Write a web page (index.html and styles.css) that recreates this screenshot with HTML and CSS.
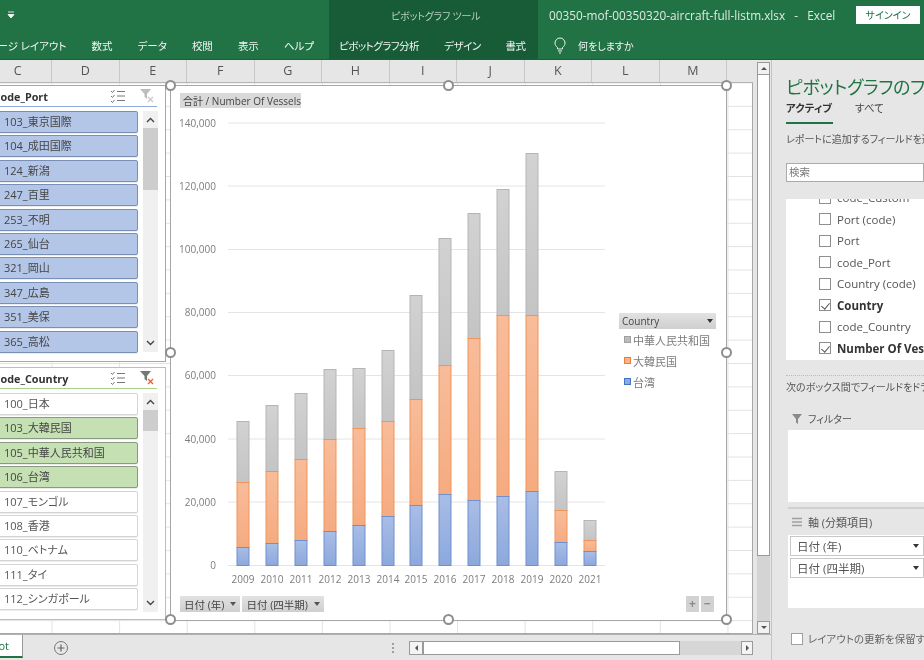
FILE: index.html
```html
<!DOCTYPE html>
<html lang="ja">
<head>
<meta charset="utf-8">
<title>Excel</title>
<link rel="stylesheet" href="styles.css">
</head>
<body>
<div class="app">
  <header class="ribbon">
    <div class="rb-left">
      <div class="qat">
        <svg width="8" height="8" viewBox="0 0 8 8"><path d="M1 1h6M1 3.500h6L4 7z" stroke="#fff" fill="#fff" stroke-width=".8"/></svg>
      </div>
      <nav class="tabs">
        <span>ページ レイアウト</span><span>数式</span><span>データ</span><span>校閲</span><span>表示</span><span>ヘルプ</span>
      </nav>
    </div>
    <div class="rb-context">
      <div class="context-title">ピボットグラフ ツール</div>
      <nav class="tabs">
        <span>ピボットグラフ分析</span><span>デザイン</span><span>書式</span>
      </nav>
    </div>
    <div class="rb-right">
      <div class="title-row">
        <span class="file-name">00350-mof-00350320-aircraft-full-listm.xlsx &nbsp;&nbsp;-&nbsp;&nbsp; Excel</span>
        <span class="signin">サインイン</span>
      </div>
      <div class="tell-row">
        <svg width="14" height="18" viewBox="0 0 14 18"><path d="M4.500 11.500C3 10.300 2 9 2 7a5 5 0 0 1 10 0c0 2-1 3.300-2.500 4.500v1.500h-5zM5 15h4M6 17h2" fill="none" stroke="#e8f2ec" stroke-width="1"/></svg>
        <span>何をしますか</span>
      </div>
    </div>
  </header>

  <main class="workspace">
    <section class="sheet">
      <div class="sheet-main">
        <div class="sheet-col">
          <div class="col-headers">
            <span class="col first">C</span><span class="col">D</span><span class="col">E</span><span class="col">F</span><span class="col">G</span><span class="col">H</span><span class="col">I</span><span class="col">J</span><span class="col">K</span><span class="col">L</span><span class="col">M</span>
          </div>
          <div class="sheet-body">
            <aside class="slicer slicer-blue">
              <div class="slicer-head">
                <span class="slicer-title">code_Port</span>
                <svg class="multi" width="16" height="14" viewBox="0 0 16 14"><path d="M1 2l1.500 1.500L4.500 1M1 7l1.500 1.500L4.500 6M1 12l1.500 1.500L4.500 11M7 2.500h8M7 7h8M7 11.500h8" fill="none" stroke="#777" stroke-width="1"/></svg>
                <svg class="clear" width="16" height="16" viewBox="0 0 16 16"><path d="M1 1h11L8 6v5L5.500 9V6z" fill="#bdbdbd"/><path d="M9 9l5 5M14 9l-5 5" stroke="#c9c9c9" stroke-width="1.300"/></svg>
              </div>
              <div class="slicer-body">
                <ul class="items">
                  <li class="on">103_東京国際</li><li class="on">104_成田国際</li><li class="on">124_新潟</li><li class="on">247_百里</li><li class="on">253_不明</li><li class="on">265_仙台</li><li class="on">321_岡山</li><li class="on">347_広島</li><li class="on">351_美保</li><li class="on">365_高松</li>
                </ul>
                <div class="mini-scroll">
                  <svg class="chev" width="9" height="6" viewBox="0 0 9 6"><path d="M1 5l3.500-3.500L8 5" fill="none" stroke="#444" stroke-width="1.400"/></svg>
                  <span class="mini-thumb tall"></span>
                  <svg class="chev bottom" width="9" height="6" viewBox="0 0 9 6"><path d="M1 1l3.500 3.500L8 1" fill="none" stroke="#444" stroke-width="1.400"/></svg>
                </div>
              </div>
            </aside>

            <aside class="slicer slicer-green">
              <div class="slicer-head">
                <span class="slicer-title">code_Country</span>
                <svg class="multi" width="16" height="14" viewBox="0 0 16 14"><path d="M1 2l1.500 1.500L4.500 1M1 7l1.500 1.500L4.500 6M1 12l1.500 1.500L4.500 11M7 2.500h8M7 7h8M7 11.500h8" fill="none" stroke="#777" stroke-width="1"/></svg>
                <svg class="clear" width="16" height="16" viewBox="0 0 16 16"><path d="M1 1h11L8 6v5L5.500 9V6z" fill="#777"/><path d="M9 9l5 5M14 9l-5 5" stroke="#e8613a" stroke-width="1.400"/></svg>
              </div>
              <div class="slicer-body">
                <ul class="items">
                  <li>100_日本</li><li class="on">103_大韓民国</li><li class="on">105_中華人民共和国</li><li class="on">106_台湾</li><li>107_モンゴル</li><li>108_香港</li><li>110_ベトナム</li><li>111_タイ</li><li>112_シンガポール</li>
                </ul>
                <div class="mini-scroll">
                  <svg class="chev" width="9" height="6" viewBox="0 0 9 6"><path d="M1 5l3.500-3.500L8 5" fill="none" stroke="#444" stroke-width="1.400"/></svg>
                  <span class="mini-thumb short"></span>
                  <svg class="chev bottom" width="9" height="6" viewBox="0 0 9 6"><path d="M1 1l3.500 3.500L8 1" fill="none" stroke="#444" stroke-width="1.400"/></svg>
                </div>
              </div>
            </aside>

            <figure class="chart">
              <svg class="plot" width="555" height="534" viewBox="171 86 555 534">
                <defs>
                  <linearGradient id="gb" x1="0" y1="0" x2="0" y2="1"><stop offset="0" stop-color="#a9bde6"/><stop offset="1" stop-color="#8ca8dc"/></linearGradient>
                  <linearGradient id="go" x1="0" y1="0" x2="0" y2="1"><stop offset="0" stop-color="#f8bc9a"/><stop offset="1" stop-color="#f5ab80"/></linearGradient>
                  <linearGradient id="gg" x1="0" y1="0" x2="0" y2="1"><stop offset="0" stop-color="#d2d2d2"/><stop offset="1" stop-color="#c4c4c4"/></linearGradient>
                </defs>
                <path class="gridlines" d="M228 123H605M228 186H605M228 249.500H605M228 312.500H605M228 375.500H605M228 439H605M228 502H605M228 565.500H605"/>
                <g class="ylab">
                  <text x="216" y="127">140,000</text><text x="216" y="190">120,000</text><text x="216" y="253">100,000</text><text x="216" y="316">80,000</text><text x="216" y="379">60,000</text><text x="216" y="443">40,000</text><text x="216" y="506">20,000</text><text x="216" y="569">0</text>
                </g>
                <g class="xlab">
                  <text x="243" y="583">2009</text><text x="272" y="583">2010</text><text x="301" y="583">2011</text><text x="330" y="583">2012</text><text x="359" y="583">2013</text><text x="388" y="583">2014</text><text x="416" y="583">2015</text><text x="445" y="583">2016</text><text x="474" y="583">2017</text><text x="503" y="583">2018</text><text x="532" y="583">2019</text><text x="561" y="583">2020</text><text x="590" y="583">2021</text>
                </g>
                <g class="s-gray">
                  <rect x="237" y="421.500" width="12" height="61"/><rect x="266" y="405.500" width="12" height="66"/><rect x="295" y="393.500" width="12" height="66"/><rect x="324" y="369.500" width="12" height="70"/><rect x="353" y="368.500" width="12" height="60"/><rect x="382" y="350.500" width="12" height="71"/><rect x="410" y="295.500" width="12" height="104"/><rect x="439" y="238.500" width="12" height="127"/><rect x="468" y="213.500" width="12" height="125"/><rect x="497" y="189.500" width="12" height="126"/><rect x="526" y="153.500" width="12" height="162"/><rect x="555" y="471.500" width="12" height="39"/><rect x="584" y="520.500" width="12" height="20"/>
                </g>
                <g class="s-orange">
                  <rect x="237" y="482.500" width="12" height="65"/><rect x="266" y="471.500" width="12" height="72"/><rect x="295" y="459.500" width="12" height="81"/><rect x="324" y="439.500" width="12" height="92"/><rect x="353" y="428.500" width="12" height="97"/><rect x="382" y="421.500" width="12" height="95"/><rect x="410" y="399.500" width="12" height="106"/><rect x="439" y="365.500" width="12" height="129"/><rect x="468" y="338.500" width="12" height="162"/><rect x="497" y="315.500" width="12" height="181"/><rect x="526" y="315.500" width="12" height="176"/><rect x="555" y="510.500" width="12" height="32"/><rect x="584" y="540.500" width="12" height="11"/>
                </g>
                <g class="s-blue">
                  <rect x="237" y="547.500" width="12" height="18"/><rect x="266" y="543.500" width="12" height="22"/><rect x="295" y="540.500" width="12" height="25"/><rect x="324" y="531.500" width="12" height="34"/><rect x="353" y="525.500" width="12" height="40"/><rect x="382" y="516.500" width="12" height="49"/><rect x="410" y="505.500" width="12" height="60"/><rect x="439" y="494.500" width="12" height="71"/><rect x="468" y="500.500" width="12" height="65"/><rect x="497" y="496.500" width="12" height="69"/><rect x="526" y="491.500" width="12" height="74"/><rect x="555" y="542.500" width="12" height="23"/><rect x="584" y="551.500" width="12" height="14"/>
                </g>
              </svg>
              <span class="field-btn value-btn">合計 / Number Of Vessels</span>
              <div class="axis-btns">
                <span class="field-btn">日付 (年)<i class="caret"></i></span>
                <span class="field-btn">日付 (四半期)<i class="caret"></i></span>
              </div>
              <div class="zoom-btns"><span>+</span><span>−</span></div>
              <div class="legend">
                <span class="field-btn legend-btn">Country<i class="caret dark"></i></span>
                <ul>
                  <li><i class="sw sw-gray"></i>中華人民共和国</li>
                  <li><i class="sw sw-orange"></i>大韓民国</li>
                  <li><i class="sw sw-blue"></i>台湾</li>
                </ul>
              </div>
              <i class="handle tl"></i><i class="handle tc"></i><i class="handle tr"></i>
              <i class="handle ml"></i><i class="handle mr"></i>
              <i class="handle bl"></i><i class="handle bc"></i><i class="handle br"></i>
            </figure>
          </div>
        </div>
        <div class="vscroll">
          <span class="sb-btn up"></span>
          <span class="sb-thumb"></span>
          <span class="sb-track"></span>
          <span class="sb-btn down"></span>
        </div>
      </div>
      <footer class="sheet-tabs">
        <span class="active-tab">Pivot</span>
        <svg class="add" width="16" height="16" viewBox="0 0 16 16"><circle cx="8" cy="8" r="6.500" fill="none" stroke="#777"/><path d="M8 4.500v7M4.500 8h7" stroke="#666" stroke-width="1.200"/></svg>
        <span class="dots"></span>
        <div class="hscroll">
          <span class="hs-btn"><i class="tri-l"></i></span>
          <span class="hs-thumb"></span>
          <span class="hs-btn right"><i class="tri-r"></i></span>
        </div>
      </footer>
    </section>

    <aside class="pane">
      <h2>ピボットグラフのフィールド</h2>
      <div class="pane-tabs"><span class="is-active">アクティブ</span><span>すべて</span></div>
      <p class="hint">レポートに追加するフィールドを選択してください:</p>
      <div class="search">検索</div>
      <ul class="fields">
        <li class="peek"><i class="cb"></i>code_Custom</li>
        <li><i class="cb"></i>Port (code)</li>
        <li><i class="cb"></i>Port</li>
        <li><i class="cb"></i>code_Port</li>
        <li><i class="cb"></i>Country (code)</li>
        <li class="bold"><i class="cb checked"></i>Country</li>
        <li><i class="cb"></i>code_Country</li>
        <li class="bold"><i class="cb checked"></i>Number Of Vessels</li>
      </ul>
      <p class="drag-hint">次のボックス間でフィールドをドラッグしてください:</p>
      <div class="area-label">
        <svg width="12" height="12" viewBox="0 0 12 12"><path d="M1 1h10L7 6v5L5 9.500V6z" fill="#8a8a8a"/></svg>
        <span>フィルター</span>
      </div>
      <div class="area-box filter-box"></div>
      <div class="area-label axis-label">
        <svg width="12" height="12" viewBox="0 0 12 12"><path d="M1 2.500h10M1 6h10M1 9.500h10" stroke="#a0a0a0" stroke-width="1.500"/></svg>
        <span>軸 (分類項目)</span>
      </div>
      <div class="area-box axis-box">
        <div class="pill">日付 (年)<i class="caret dark"></i></div>
        <div class="pill">日付 (四半期)<i class="caret dark"></i></div>
      </div>
      <label class="defer"><i class="cb big"></i>レイアウトの更新を保留する</label>
    </aside>
  </main>
</div>
</body>
</html>
```

FILE: styles.css
```css
* { box-sizing: border-box; }
html, body { margin: 0; padding: 0; height: 100%; overflow: hidden; }
body {
  font-family: "Open Sans", "Noto Sans CJK JP", "Liberation Sans", sans-serif;
  font-feature-settings: "palt";
  color: #444;
  background: #e6e6e6;
}
ul { list-style: none; margin: 0; padding: 0; }
p, h2, figure { margin: 0; }
i { font-style: normal; }

.app { width: 924px; height: 660px; display: flex; flex-direction: column; overflow: hidden; filter: blur(0.35px); }

/* ribbon */
.ribbon {
  height: 60px; flex: none; display: flex;
  background: #217346; color: #f1f6f3; font-size: 11px;
  border-bottom: 1px solid #1a5f3a; overflow: hidden;
}
.tabs { display: flex; align-items: center; gap: 25px; height: 28px; white-space: nowrap; font-size: 10.500px; letter-spacing: -0.5px; }
.rb-left { width: 329px; flex: none; overflow: hidden; }
.rb-left .tabs { justify-content: flex-end; padding-right: 15px; letter-spacing: 0; }
.qat { height: 31px; padding: 11px 0 0 7px; }
.qat svg { display: block; }
.rb-context { width: 209px; flex: none; background: #185c37; padding-left: 10px; }
.context-title { height: 31px; padding: 8px 0 0 52px; color: #b5cfc0; font-size: 10px; letter-spacing: -0.2px; }
.rb-right { flex: 1; min-width: 0; }
.title-row { display: flex; align-items: center; justify-content: space-between; height: 31px; padding: 0 4px 2px 11px; }
.file-name { font-size: 11.800px; color: #dfeae4; white-space: nowrap; }
.signin { width: 64px; height: 18px; background: #fff; color: #217346; font-size: 10px; line-height: 18px; text-align: center; }
.tell-row { display: flex; align-items: center; gap: 11px; height: 28px; padding-left: 15px; font-size: 10px; }

/* sheet */
.workspace { flex: 1; display: flex; min-height: 0; }
.sheet { width: 772px; flex: none; display: flex; flex-direction: column; border-right: 1px solid #c4c4c4; background: #e6e6e6; }
.sheet-main { flex: 1; min-height: 0; display: flex; }
.sheet-col { width: 753px; flex: none; display: flex; flex-direction: column; }
.col-headers { height: 23px; flex: none; display: flex; background: #e6e6e6; border-bottom: 1px solid #b5b5b5; color: #555; font-size: 12.500px; overflow: hidden; }
.col { width: 67.500px; flex: none; text-align: center; line-height: 22px; border-right: 1px solid #c8c8c8; }
.col.first { margin-left: -15.500px; }
.sheet-body {
  position: relative; flex: 1; min-height: 0;
  background-color: #fff;
  background-image:
    linear-gradient(to right, #e2e2e2 1px, transparent 1px),
    linear-gradient(to bottom, #e2e2e2 1px, transparent 1px);
  background-size: 67.600px 23.390px;
  background-position: 51.500px -0.500px;
  border-right: 1px solid #a8a8a8;
  border-bottom: 1px solid #a8a8a8;
}
.vscroll { width: 13px; flex: none; margin: 2px 2px 0 4px; display: flex; flex-direction: column; }
.sb-btn { display: block; height: 13px; flex: none; background: #f2f2f2; border: 1px solid #9a9a9a; position: relative; }
.sb-btn::after { content: ""; position: absolute; left: 2.500px; top: 4px; border-left: 3px solid transparent; border-right: 3px solid transparent; }
.sb-btn.up::after { border-bottom: 3px solid #555; }
.sb-btn.down::after { border-top: 3px solid #555; }
.sb-thumb { height: 481px; flex: none; background: #fff; border: 1px solid #9a9a9a; border-top: 0; }
.sb-track { flex: 1; background: #d4d4d4; }

/* slicers */
.slicer { position: absolute; left: -30px; width: 196px; background: #fff; padding: 0 8px 0 30px; }
.slicer-blue { top: 2px; height: 277px; border: 1px solid #8eaadb; }
.slicer-green { top: 284px; height: 253px; border: 1px solid #a9d18e; }
.slicer-head { display: flex; align-items: center; height: 21px; margin-left: -6px; border-bottom: 1px solid #8eaadb; }
.slicer-green .slicer-head { border-bottom-color: #a9d18e; }
.slicer-title { flex: 1; font-size: 10.800px; font-weight: 700; color: #333; white-space: nowrap; }
.multi { margin-right: 13px; }
.clear { margin-right: 2px; }
.slicer-body { display: flex; margin-top: 4px; }
.items { width: 137px; flex: none; display: flex; flex-direction: column; gap: 2.400px; margin-left: -30px; }
.items li {
  height: 22px; line-height: 20px; padding-left: 32px; width: 167px;
  border: 1px solid #d4d4d4; border-radius: 2px; background: #fff;
  font-size: 11px; color: #555; white-space: nowrap; box-shadow: 0 1px 0 #ececec;
}
.slicer-blue .items li.on { background: #b4c6e7; border-color: #7a8fb5; color: #444; }
.slicer-green .items li.on { background: #c5e0b3; border-color: #8a9a80; color: #444; }
.mini-scroll { position: relative; width: 15px; margin-left: 35px; background: #f0f0f0; flex: none; }
.slicer-blue .mini-scroll { height: 241px; }
.slicer-green .mini-scroll { height: 219px; }
.chev { position: absolute; left: 3px; top: 6px; }
.chev.bottom { top: auto; bottom: 6px; }
.mini-thumb { position: absolute; left: 0; width: 15px; background: #cdcdcd; display: block; }
.mini-thumb.tall { top: 17px; height: 62px; }
.mini-thumb.short { top: 17px; height: 21px; }

/* chart */
.chart { position: absolute; left: 171px; top: 3px; width: 555px; height: 534px; background: #fff; outline: 1.500px solid #a6a6a6; }
.plot { display: block; }
.gridlines { stroke: #e4e4e4; fill: none; stroke-width: 1; }
.ylab text { text-anchor: end; font-size: 10px; fill: #7c7c7c; }
.xlab text { text-anchor: middle; font-size: 10px; fill: #7c7c7c; }
.s-blue rect { fill: url(#gb); stroke: #6f8fd0; stroke-width: 1; }
.s-orange rect { fill: url(#go); stroke: #f0955a; stroke-width: 1; }
.s-gray rect { fill: url(#gg); stroke: #b5b5b5; stroke-width: 1; }
.field-btn {
  display: flex; align-items: center; height: 16px; padding: 0 4px;
  background: linear-gradient(to bottom, #e2e2e2, #cfcfcf);
  font-size: 10.500px; color: #444; white-space: nowrap;
}
.value-btn { position: absolute; left: 9px; top: 7px; height: 15px; width: 121px; background: #d9d9d9; font-size: 10px; padding: 0 3px; }
.axis-btns { position: absolute; left: 9px; top: 510px; display: flex; gap: 2px; }
.caret { width: 0; height: 0; margin-left: 6px; border-left: 3.500px solid transparent; border-right: 3.500px solid transparent; border-top: 4px solid #555; }
.caret.dark { border-top-color: #333; }
.zoom-btns { position: absolute; left: 515px; top: 510px; display: flex; gap: 2px; }
.zoom-btns span { width: 13px; height: 16px; background: #d2d2d2; color: #8a8a8a; font-size: 12px; font-weight: 700; line-height: 15px; text-align: center; }
.legend { position: absolute; left: 448px; top: 227px; width: 97px; }
.legend-btn { width: 97px; justify-content: space-between; padding: 0 3px; font-size: 10px; }
.legend ul { padding-left: 5px; }
.legend li { display: flex; align-items: center; height: 21px; font-size: 11px; color: #7c7c7c; white-space: nowrap; }
.sw { width: 7px; height: 7px; margin-right: 2px; flex: none; }
.sw-gray { background: #bcbcbc; border: 1px solid #a0a0a0; }
.sw-orange { background: #f8b48c; border: 1px solid #ed7d31; }
.sw-blue { background: #8ea9db; border: 1px solid #4472c4; }
.handle { position: absolute; width: 11px; height: 11px; border-radius: 50%; background: #fff; border: 2px solid #8e8e8e; }
.handle.tl { left: -6px; top: -6px; }
.handle.tc { left: 272px; top: -6px; }
.handle.tr { left: 550px; top: -6px; }
.handle.ml { left: -6px; top: 261px; }
.handle.mr { left: 550px; top: 261px; }
.handle.bl { left: -6px; top: 528px; }
.handle.bc { left: 272px; top: 528px; }
.handle.br { left: 550px; top: 528px; }

/* bottom */
.sheet-tabs { height: 26px; flex: none; display: flex; align-items: center; background: #e6e6e6; border-top: 1px solid #b0b0b0; }
.active-tab {
  width: 23px; height: 23px; margin-bottom: 2px; background: #fff; border-right: 1px solid #9a9a9a; border-bottom: 2px solid #217346;
  color: #217346; font-size: 11px; line-height: 22px; padding-right: 13px; overflow: hidden;
  display: flex; justify-content: flex-end; white-space: nowrap; flex: none;
}
.add { margin-left: 30px; }
.dots { width: 2px; height: 10px; margin-left: 323px; border-left: 2px dotted #9e9e9e; }
.hscroll { display: flex; align-items: stretch; width: 344px; height: 14px; margin-left: 15px; background: #d6d6d6; }
.hs-btn { width: 14px; flex: none; background: #f4f4f4; border: 1px solid #9a9a9a; display: flex; align-items: center; justify-content: center; }
.hs-btn.right { width: 12px; margin-left: 61px; }
.tri-l { border-top: 3px solid transparent; border-bottom: 3px solid transparent; border-right: 3px solid #555; }
.tri-r { border-top: 3px solid transparent; border-bottom: 3px solid transparent; border-left: 3px solid #555; }
.hs-thumb { width: 257px; flex: none; background: #fff; border: 1px solid #9a9a9a; }

/* pane */
.pane { flex: 1; min-width: 0; padding-left: 3px; background: #e6e6e6; overflow: hidden; white-space: nowrap; }
.pane h2 { font-size: 18px; letter-spacing: -0.3px; font-weight: 400; color: #217346; line-height: 26px; padding: 13px 0 0 11px; height: 39px; font-family: "Noto Sans CJK JP", sans-serif; }
.pane-tabs { display: flex; gap: 22px; margin-left: 11px; font-size: 10.500px; height: 25px; padding-top: 1px; }
.pane-tabs .is-active { font-weight: 700; width: 47px; height: 24px; border-bottom: 2px solid #217346; color: #333; }
.hint { font-size: 10px; color: #555; padding-left: 11px; height: 39px; line-height: 30px; }
.search { margin-left: 11px; height: 19px; background: #fff; border: 1px solid #ababab; font-size: 10.500px; line-height: 16px; padding-left: 2px; color: #777; }
.fields { margin: 17px 0 0 11px; height: 161px; background: #fff; overflow: hidden; padding-left: 33px; }
.fields li { display: flex; align-items: center; gap: 6px; height: 21.500px; font-size: 11.500px; color: #555; }
.fields li.peek { margin-top: -12px; }
.fields li.bold { font-weight: 700; color: #333; }
.cb { display: inline-block; width: 12px; height: 12px; flex: none; background: #fff; border: 1px solid #8f8f8f; position: relative; }
.cb.checked::after { content: ""; position: absolute; left: 3px; top: 1px; width: 4px; height: 7px; border: solid #555; border-width: 0 1px 1px 0; transform: rotate(40deg); }
.drag-hint { margin: 15px 0 0 11px; padding-top: 3px; border-top: 1px dotted #bcbcbc; font-size: 10px; color: #555; height: 33px; }
.area-label { display: flex; align-items: center; gap: 5px; margin-left: 16px; height: 21px; font-size: 10px; color: #555; }
.area-box { margin-left: 13px; background: #fff; }
.filter-box { height: 72px; margin-top: 1px; }
.axis-label { margin: 5px 0 0 13px; border-top: 2px solid #d0d0d0; padding-left: 3px; height: 28px; font-size: 11px; }
.axis-box { height: 73px; padding: 1px 0 0 2px; }
.pill {
  display: flex; align-items: center; justify-content: space-between;
  height: 20px; margin-bottom: 2px; padding: 0 4px 0 6px;
  background: #fff; border: 1px solid #c8c8c8; font-size: 11.500px; color: #555;
}
.defer { display: flex; align-items: center; gap: 5px; margin: 23px 0 0 16px; font-size: 10.500px; color: #666; }
.cb.big { border-color: #a0a0a0; }
```
